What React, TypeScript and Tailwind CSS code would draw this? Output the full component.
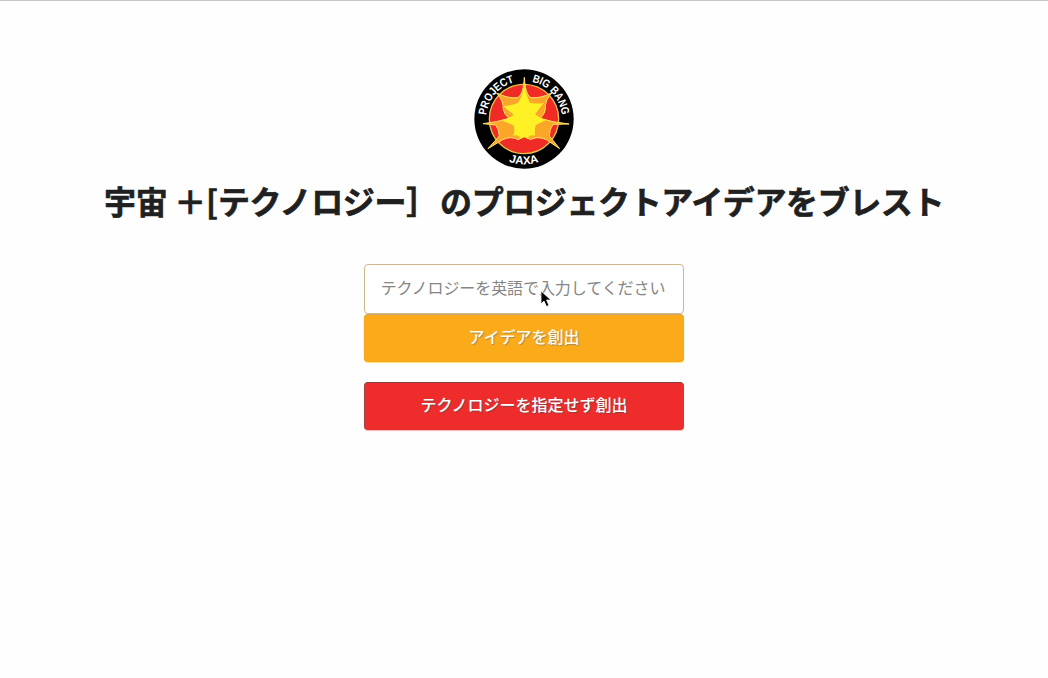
function Logo() {
  return (
    <svg width="100" height="100" viewBox="3 3 300 300" className="block">
      <defs>
        <path id="ringTop" d="M39 153 A114 114 0 0 1 267 153" />
        <path id="ringBottom" d="M17 153 A136 136 0 0 0 289 153" />
        <pattern id="mesh" width="7" height="7" patternUnits="userSpaceOnUse" patternTransform="rotate(35)">
          <rect width="7" height="7" fill="#f9951d" />
          <path d="M0 2H7M2 0V7" stroke="#fdbd35" strokeWidth="1.8" />
        </pattern>
      </defs>
      <circle cx="153" cy="153" r="149" fill="#000" />
      <circle cx="153" cy="153" r="104" fill="#ee2b24" stroke="#e8c04a" strokeWidth="4" />
      <path
        d="M154 28 C156 60 161 82 174 89 Q204 92 237 74 Q214 98 217 125 Q214 140 202 151 L240 161 L288 168 L240 169 Q229 184 229 204 L260 242 L220 215 Q194 203 172 215 L154 204 L136 215 Q114 203 89 215 L45 242 L79 204 Q78 184 68 171 L30 167 L70 161 L108 151 Q94 140 91 125 Q92 98 71 75 Q104 92 134 89 C147 82 152 60 154 28Z"
        fill="url(#mesh)"
        stroke="#ffe36a"
        strokeWidth="3"
      />
      <path
        d="M154 44 C157 68 161 85 172 105 Q188 108 211 106 Q198 124 186 139 Q202 151 218 157 Q200 165 188 172 Q184 188 186 203 Q169 198 164 213 L154 208 L142 213 Q138 198 121 203 Q126 188 122 172 Q108 165 88 159 Q106 151 122 141 Q108 128 90 114 Q116 113 135 105 C147 86 151 68 154 44Z"
        fill="#fff126"
      />
      <g fill="#fff" fontFamily="'Liberation Sans', sans-serif" fontWeight="700" fontSize="34">
        <text>
          <textPath href="#ringTop" startOffset="11" textLength="138" lengthAdjust="spacingAndGlyphs">PROJECT</textPath>
        </text>
        <text>
          <textPath href="#ringTop" startOffset="203" textLength="143" lengthAdjust="spacingAndGlyphs">BIG BANG</textPath>
        </text>
        <text>
          <textPath href="#ringBottom" startOffset="167" textLength="92" lengthAdjust="spacingAndGlyphs">JAXA</textPath>
        </text>
      </g>
    </svg>
  );
}

function Cursor() {
  return (
    <svg className="pointer-events-none absolute left-[176px] top-[26px]" width="12" height="18" viewBox="0 0 12 18">
      <path d="M1 1V14L4 11L6.5 16.5L9 15.5L6.6 10H11Z" fill="#000" stroke="#fff" strokeWidth="0.8" />
    </svg>
  );
}

export default function App() {
  return (
    <main className="flex h-[678px] w-full flex-col items-center overflow-hidden border-t border-[#c6c6c6] bg-[#fefefe] pt-[68px] font-['Liberation_Sans','Noto_Sans_CJK_JP',sans-serif]">
      <Logo />
      <h1 className="mt-[7px] whitespace-nowrap font-['Noto_Sans_CJK_JP',sans-serif] text-[32px] leading-[48px] font-bold tracking-[-0.28px] text-[#202020] [-webkit-text-stroke:0.6px_#202020]">
        宇宙 ＋[テクノロジー］<span className="ml-[2px] tracking-[-0.4px]">のプロジェクトアイデアをブレスト</span>
      </h1>
      <form className="mt-[40px] flex w-[320px] flex-col" onSubmit={(e) => e.preventDefault()}>
        <div className="relative">
          <input
            className="block h-[50px] w-full rounded-[4px] border border-[#d0b68b] bg-white pr-[17px] pl-[15px] pb-1 text-center font-['Noto_Sans_CJK_JP',sans-serif] text-[16px] tracking-[-0.08px] outline-none placeholder:text-[#858585]"
            placeholder="テクノロジーを英語で入力してください"
          />
          <Cursor />
        </div>
        <button className="h-[48px] rounded-[4px] border border-[#f9a51a] border-t-[#c9a66b] bg-[#fbaa19] pb-[5px] font-['Noto_Sans_CJK_JP',sans-serif] text-[16px] font-medium text-[#fffbe9] shadow-[0_1px_1px_#ffdf75] [text-shadow:1px_1px_1px_#a58b5c]">
          アイデアを創出
        </button>
        <button className="mt-[20px] h-[48px] rounded-[4px] border border-[#ee2c2c] border-t-[#804040] border-l-[#a04343] bg-[#ee2c2c] pb-[5px] font-['Noto_Sans_CJK_JP',sans-serif] text-[16px] font-medium text-white shadow-[0_1px_1px_#f5b5b5] [text-shadow:1px_1px_1px_#884040]">
          テクノロジーを指定せず創出
        </button>
      </form>
    </main>
  );
}
